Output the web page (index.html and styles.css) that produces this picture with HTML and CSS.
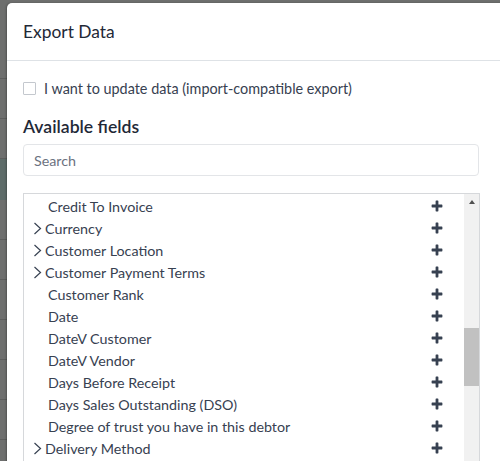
FILE: index.html
```html
<!DOCTYPE html>
<html lang="en">
<head>
<meta charset="utf-8">
<title>Export Data</title>
<link rel="stylesheet" href="styles.css">
</head>
<body>
<div class="backdrop">
  <div class="band b-top"></div>
  <div class="band b-40"></div>
  <div class="band b-40"></div>
  <div class="band b-teal"></div>
  <div class="band b-40"></div>
  <div class="band b-40"></div>
  <div class="band b-40"></div>
  <div class="band b-40"></div>
  <div class="band b-40"></div>
  <div class="band b-40"></div>
</div>
<div class="modal">
  <header class="modal-header">
    <h4 class="modal-title">Export Data</h4>
  </header>
  <div class="modal-body">
    <div class="col">
      <label class="check"><span class="box"></span><span>I want to update data (import-compatible export)</span></label>
      <h5 class="section-title">Available fields</h5>
      <input class="search" type="text" placeholder="Search">
      <div class="fields">
        <ul class="list">
          <li class="row"><span class="name">Credit To Invoice</span><span class="plus"><svg viewBox="0 0 12 12"><path d="M4.6 1.2a.6.6 0 0 1 .6-.6h1.6a.6.6 0 0 1 .6.6v3.4h3.4a.6.6 0 0 1 .6.6v1.6a.6.6 0 0 1-.6.6H7.4v3.4a.6.6 0 0 1-.6.6H5.2a.6.6 0 0 1-.6-.6V7.4H1.2a.6.6 0 0 1-.6-.6V5.2a.6.6 0 0 1 .6-.6h3.4z"/></svg></span></li>
          <li class="row has-caret"><span class="caret"><svg viewBox="0 0 9 13"><path d="M1.5 1l6 5.5-6 5.5"/></svg></span><span class="name">Currency</span><span class="plus"><svg viewBox="0 0 12 12"><path d="M4.6 1.2a.6.6 0 0 1 .6-.6h1.6a.6.6 0 0 1 .6.6v3.4h3.4a.6.6 0 0 1 .6.6v1.6a.6.6 0 0 1-.6.6H7.4v3.4a.6.6 0 0 1-.6.6H5.2a.6.6 0 0 1-.6-.6V7.4H1.2a.6.6 0 0 1-.6-.6V5.2a.6.6 0 0 1 .6-.6h3.4z"/></svg></span></li>
          <li class="row has-caret"><span class="caret"><svg viewBox="0 0 9 13"><path d="M1.5 1l6 5.5-6 5.5"/></svg></span><span class="name">Customer Location</span><span class="plus"><svg viewBox="0 0 12 12"><path d="M4.6 1.2a.6.6 0 0 1 .6-.6h1.6a.6.6 0 0 1 .6.6v3.4h3.4a.6.6 0 0 1 .6.6v1.6a.6.6 0 0 1-.6.6H7.4v3.4a.6.6 0 0 1-.6.6H5.2a.6.6 0 0 1-.6-.6V7.4H1.2a.6.6 0 0 1-.6-.6V5.2a.6.6 0 0 1 .6-.6h3.4z"/></svg></span></li>
          <li class="row has-caret"><span class="caret"><svg viewBox="0 0 9 13"><path d="M1.5 1l6 5.5-6 5.5"/></svg></span><span class="name">Customer Payment Terms</span><span class="plus"><svg viewBox="0 0 12 12"><path d="M4.6 1.2a.6.6 0 0 1 .6-.6h1.6a.6.6 0 0 1 .6.6v3.4h3.4a.6.6 0 0 1 .6.6v1.6a.6.6 0 0 1-.6.6H7.4v3.4a.6.6 0 0 1-.6.6H5.2a.6.6 0 0 1-.6-.6V7.4H1.2a.6.6 0 0 1-.6-.6V5.2a.6.6 0 0 1 .6-.6h3.4z"/></svg></span></li>
          <li class="row"><span class="name">Customer Rank</span><span class="plus"><svg viewBox="0 0 12 12"><path d="M4.6 1.2a.6.6 0 0 1 .6-.6h1.6a.6.6 0 0 1 .6.6v3.4h3.4a.6.6 0 0 1 .6.6v1.6a.6.6 0 0 1-.6.6H7.4v3.4a.6.6 0 0 1-.6.6H5.2a.6.6 0 0 1-.6-.6V7.4H1.2a.6.6 0 0 1-.6-.6V5.2a.6.6 0 0 1 .6-.6h3.4z"/></svg></span></li>
          <li class="row"><span class="name">Date</span><span class="plus"><svg viewBox="0 0 12 12"><path d="M4.6 1.2a.6.6 0 0 1 .6-.6h1.6a.6.6 0 0 1 .6.6v3.4h3.4a.6.6 0 0 1 .6.6v1.6a.6.6 0 0 1-.6.6H7.4v3.4a.6.6 0 0 1-.6.6H5.2a.6.6 0 0 1-.6-.6V7.4H1.2a.6.6 0 0 1-.6-.6V5.2a.6.6 0 0 1 .6-.6h3.4z"/></svg></span></li>
          <li class="row"><span class="name">DateV Customer</span><span class="plus"><svg viewBox="0 0 12 12"><path d="M4.6 1.2a.6.6 0 0 1 .6-.6h1.6a.6.6 0 0 1 .6.6v3.4h3.4a.6.6 0 0 1 .6.6v1.6a.6.6 0 0 1-.6.6H7.4v3.4a.6.6 0 0 1-.6.6H5.2a.6.6 0 0 1-.6-.6V7.4H1.2a.6.6 0 0 1-.6-.6V5.2a.6.6 0 0 1 .6-.6h3.4z"/></svg></span></li>
          <li class="row"><span class="name">DateV Vendor</span><span class="plus"><svg viewBox="0 0 12 12"><path d="M4.6 1.2a.6.6 0 0 1 .6-.6h1.6a.6.6 0 0 1 .6.6v3.4h3.4a.6.6 0 0 1 .6.6v1.6a.6.6 0 0 1-.6.6H7.4v3.4a.6.6 0 0 1-.6.6H5.2a.6.6 0 0 1-.6-.6V7.4H1.2a.6.6 0 0 1-.6-.6V5.2a.6.6 0 0 1 .6-.6h3.4z"/></svg></span></li>
          <li class="row"><span class="name">Days Before Receipt</span><span class="plus"><svg viewBox="0 0 12 12"><path d="M4.6 1.2a.6.6 0 0 1 .6-.6h1.6a.6.6 0 0 1 .6.6v3.4h3.4a.6.6 0 0 1 .6.6v1.6a.6.6 0 0 1-.6.6H7.4v3.4a.6.6 0 0 1-.6.6H5.2a.6.6 0 0 1-.6-.6V7.4H1.2a.6.6 0 0 1-.6-.6V5.2a.6.6 0 0 1 .6-.6h3.4z"/></svg></span></li>
          <li class="row"><span class="name">Days Sales Outstanding (DSO)</span><span class="plus"><svg viewBox="0 0 12 12"><path d="M4.6 1.2a.6.6 0 0 1 .6-.6h1.6a.6.6 0 0 1 .6.6v3.4h3.4a.6.6 0 0 1 .6.6v1.6a.6.6 0 0 1-.6.6H7.4v3.4a.6.6 0 0 1-.6.6H5.2a.6.6 0 0 1-.6-.6V7.4H1.2a.6.6 0 0 1-.6-.6V5.2a.6.6 0 0 1 .6-.6h3.4z"/></svg></span></li>
          <li class="row"><span class="name">Degree of trust you have in this debtor</span><span class="plus"><svg viewBox="0 0 12 12"><path d="M4.6 1.2a.6.6 0 0 1 .6-.6h1.6a.6.6 0 0 1 .6.6v3.4h3.4a.6.6 0 0 1 .6.6v1.6a.6.6 0 0 1-.6.6H7.4v3.4a.6.6 0 0 1-.6.6H5.2a.6.6 0 0 1-.6-.6V7.4H1.2a.6.6 0 0 1-.6-.6V5.2a.6.6 0 0 1 .6-.6h3.4z"/></svg></span></li>
          <li class="row has-caret"><span class="caret"><svg viewBox="0 0 9 13"><path d="M1.5 1l6 5.5-6 5.5"/></svg></span><span class="name">Delivery Method</span><span class="plus"><svg viewBox="0 0 12 12"><path d="M4.6 1.2a.6.6 0 0 1 .6-.6h1.6a.6.6 0 0 1 .6.6v3.4h3.4a.6.6 0 0 1 .6.6v1.6a.6.6 0 0 1-.6.6H7.4v3.4a.6.6 0 0 1-.6.6H5.2a.6.6 0 0 1-.6-.6V7.4H1.2a.6.6 0 0 1-.6-.6V5.2a.6.6 0 0 1 .6-.6h3.4z"/></svg></span></li>
        </ul>
        <div class="scrollbar">
          <div class="arrow-up"></div>
          <div class="thumb"></div>
        </div>
      </div>
    </div>
  </div>
</div>
</body>
</html>
```
FILE: styles.css
```css
html, body {
  margin: 0;
  padding: 0;
  width: 500px;
  height: 461px;
  overflow: hidden;
}
body {
  position: relative;
  background: #6e6f6e;
  font-family: Lato, "Open Sans", sans-serif;
  color: #374151;
}
.backdrop {
  display: flex;
  flex-direction: column;
}
.band {
  flex: none;
  border-bottom: 1px solid #5d5e5d;
  box-sizing: border-box;
}
.b-top { height: 79px; }
.b-40 { height: 40px; }
.b-teal { height: 41px; background: #5e6c69; border-bottom: 0; }

.modal {
  position: absolute;
  left: 7px;
  top: 3px;
  width: 540px;
  height: 520px;
  background: #fff;
  border-radius: 5px;
  box-shadow: -1px 0 2px rgba(0, 0, 0, 0.25);
}
.modal-header {
  padding: 16px;
  border-bottom: 1px solid #dee2e6;
}
.modal-title {
  margin: 0;
  font-size: 17.4px;
  font-weight: 400;
  line-height: 25px;
  color: #1f2937;
}
.modal-body {
  padding: 17px 16px;
}
.col {
  width: 457px;
}
.check {
  display: flex;
  align-items: center;
  gap: 8px;
  font-size: 14.4px;
  line-height: 21px;
}
.box {
  width: 11px;
  height: 11px;
  border: 1px solid #c4c8ce;
  border-radius: 1px;
  background: #fff;
}
.section-title {
  margin: 16px 0 5px;
  font-size: 17.6px;
  font-weight: 600;
  line-height: 24px;
  color: #1f2937;
}
.search {
  display: block;
  box-sizing: border-box;
  width: 456px;
  height: 32px;
  margin: 0;
  padding: 0 10px;
  border: 1px solid #e3e5e8;
  border-radius: 4px;
  font-family: inherit;
  font-size: 14.3px;
  color: #374151;
  outline: none;
}
.search::placeholder {
  color: #6b7280;
}
.fields {
  display: flex;
  margin-top: 17px;
  border: 1px solid #d6d8db;
  height: 320px;
}
.list {
  flex: 1;
  margin: 0;
  padding: 1px 0 0;
  list-style: none;
}
.row {
  display: flex;
  align-items: center;
  height: 22px;
  padding-left: 24px;
  padding-right: 21px;
  font-size: 14.3px;
}
.row.has-caret {
  padding-left: 9px;
}
.caret {
  display: flex;
  flex: none;
  width: 9px;
  height: 13px;
  margin-right: 3px;
}
.caret svg {
  display: block;
  width: 9px;
  height: 13px;
  fill: none;
  stroke: #374151;
  stroke-width: 1.2;
}
.name {
  flex: 1;
}
.plus {
  display: flex;
}
.plus svg {
  width: 12px;
  height: 12px;
  fill: #374151;
}
.scrollbar {
  width: 15px;
  background: #f1f1f1;
  display: flex;
  flex-direction: column;
  align-items: center;
}
.arrow-up {
  margin-top: 6px;
  width: 0;
  height: 0;
  border-left: 3.5px solid transparent;
  border-right: 3.5px solid transparent;
  border-bottom: 4px solid #505050;
}
.thumb {
  margin-top: 124px;
  width: 15px;
  height: 58px;
  background: #c1c1c1;
}
```
